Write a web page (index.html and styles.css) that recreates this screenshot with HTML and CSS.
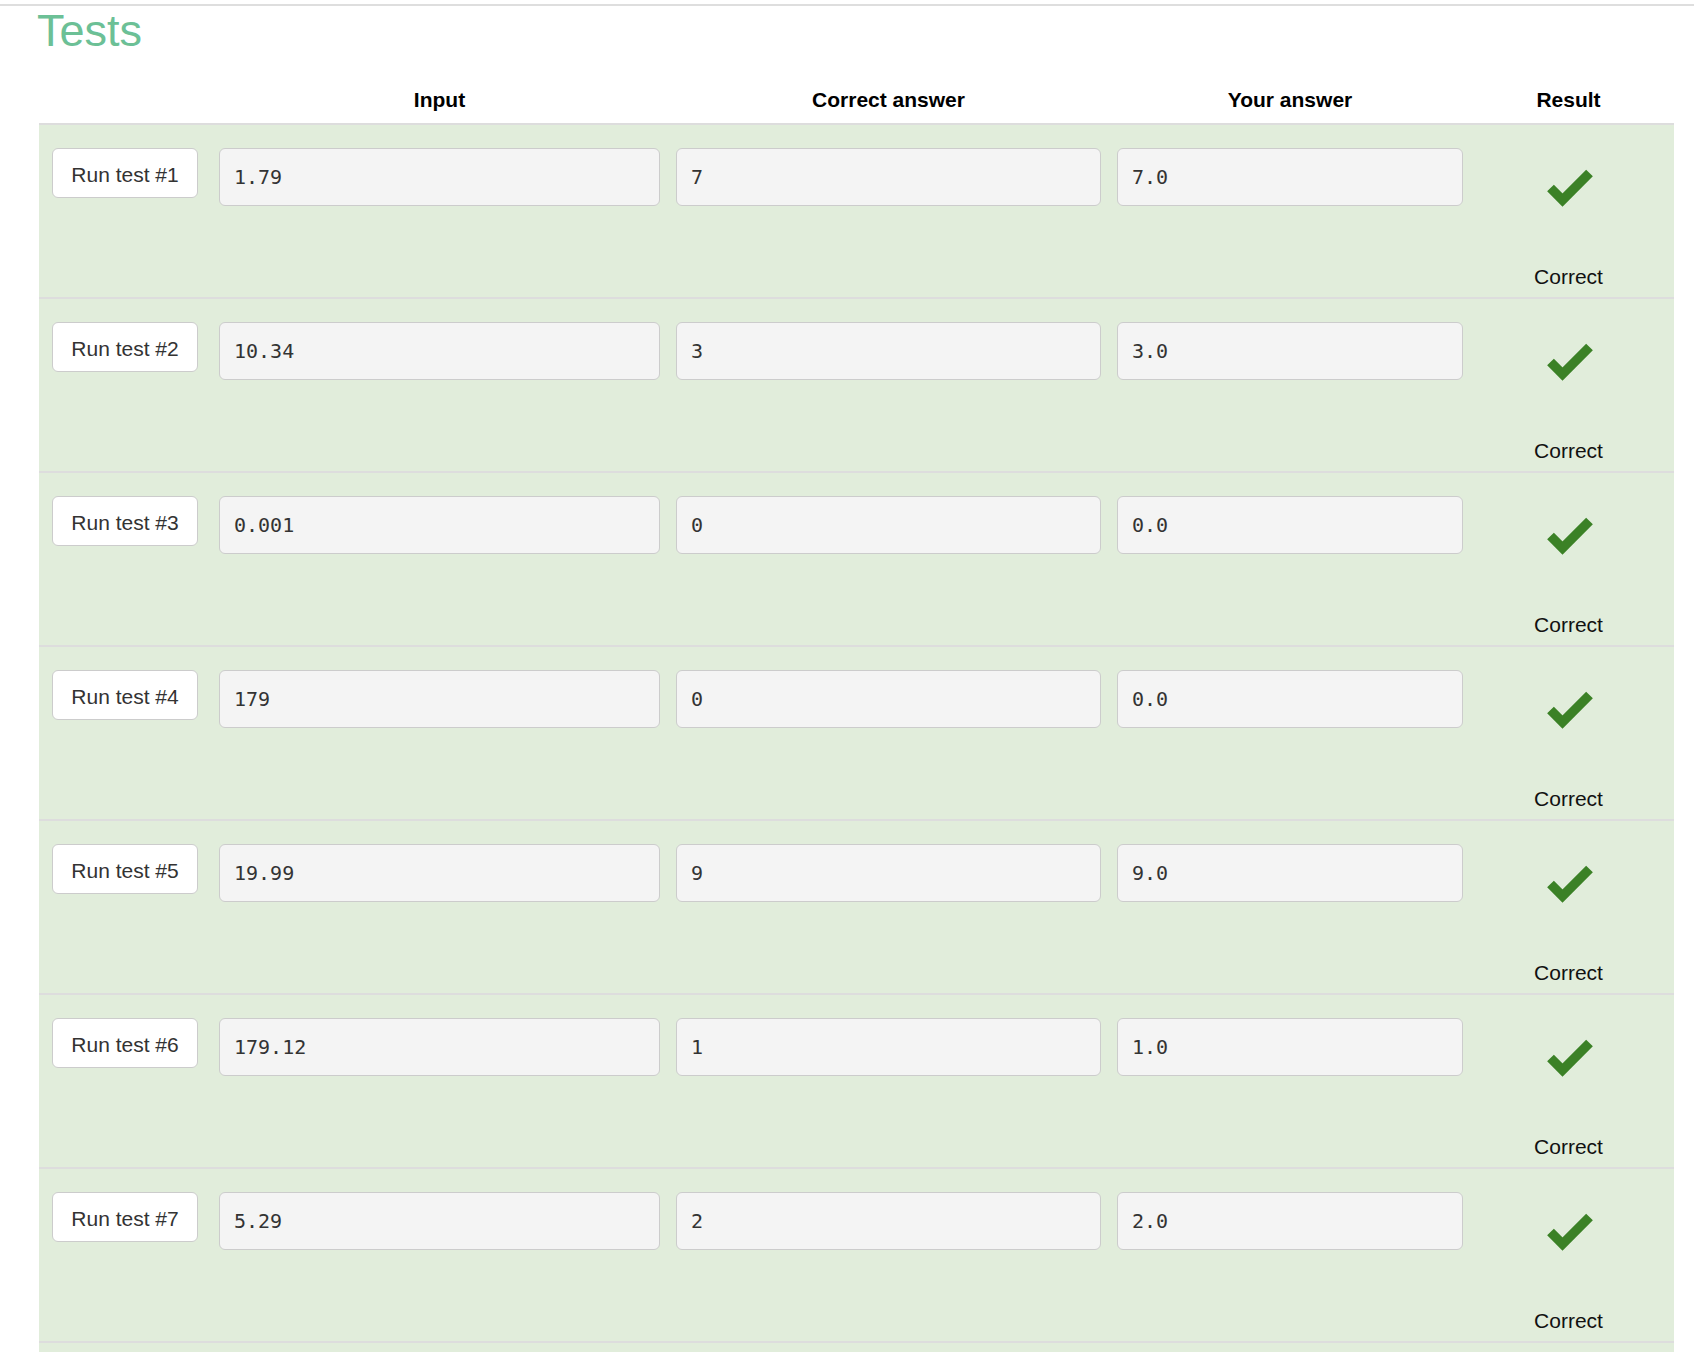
FILE: index.html
```html
<!DOCTYPE html>
<html lang="en">
<head>
<meta charset="utf-8">
<title>Tests</title>
<link rel="stylesheet" href="styles.css">
</head>
<body>
<section class="tests">
  <h2 class="tests-title">Tests</h2>
  <table class="tests-table">
    <colgroup>
      <col class="col-run">
      <col class="col-input">
      <col class="col-correct">
      <col class="col-yours">
      <col class="col-result">
    </colgroup>
    <thead>
      <tr>
        <th></th>
        <th>Input</th>
        <th>Correct answer</th>
        <th>Your answer</th>
        <th class="result-head">Result</th>
      </tr>
    </thead>
    <tbody>
      <tr class="pass">
        <td class="run-cell"><button class="run-btn" type="button">Run test #1</button></td>
        <td><input class="field" type="text" readonly value="1.79"></td>
        <td><input class="field" type="text" readonly value="7"></td>
        <td><input class="field" type="text" readonly value="7.0"></td>
        <td class="result-cell"><svg class="check" viewBox="0 0 48 38" width="48" height="38"><polyline points="5.5,19 17.5,31 44.5,4"/></svg><span class="verdict">Correct</span></td>
      </tr>
      <tr class="pass">
        <td class="run-cell"><button class="run-btn" type="button">Run test #2</button></td>
        <td><input class="field" type="text" readonly value="10.34"></td>
        <td><input class="field" type="text" readonly value="3"></td>
        <td><input class="field" type="text" readonly value="3.0"></td>
        <td class="result-cell"><svg class="check" viewBox="0 0 48 38" width="48" height="38"><polyline points="5.5,19 17.5,31 44.5,4"/></svg><span class="verdict">Correct</span></td>
      </tr>
      <tr class="pass">
        <td class="run-cell"><button class="run-btn" type="button">Run test #3</button></td>
        <td><input class="field" type="text" readonly value="0.001"></td>
        <td><input class="field" type="text" readonly value="0"></td>
        <td><input class="field" type="text" readonly value="0.0"></td>
        <td class="result-cell"><svg class="check" viewBox="0 0 48 38" width="48" height="38"><polyline points="5.5,19 17.5,31 44.5,4"/></svg><span class="verdict">Correct</span></td>
      </tr>
      <tr class="pass">
        <td class="run-cell"><button class="run-btn" type="button">Run test #4</button></td>
        <td><input class="field" type="text" readonly value="179"></td>
        <td><input class="field" type="text" readonly value="0"></td>
        <td><input class="field" type="text" readonly value="0.0"></td>
        <td class="result-cell"><svg class="check" viewBox="0 0 48 38" width="48" height="38"><polyline points="5.5,19 17.5,31 44.5,4"/></svg><span class="verdict">Correct</span></td>
      </tr>
      <tr class="pass">
        <td class="run-cell"><button class="run-btn" type="button">Run test #5</button></td>
        <td><input class="field" type="text" readonly value="19.99"></td>
        <td><input class="field" type="text" readonly value="9"></td>
        <td><input class="field" type="text" readonly value="9.0"></td>
        <td class="result-cell"><svg class="check" viewBox="0 0 48 38" width="48" height="38"><polyline points="5.5,19 17.5,31 44.5,4"/></svg><span class="verdict">Correct</span></td>
      </tr>
      <tr class="pass">
        <td class="run-cell"><button class="run-btn" type="button">Run test #6</button></td>
        <td><input class="field" type="text" readonly value="179.12"></td>
        <td><input class="field" type="text" readonly value="1"></td>
        <td><input class="field" type="text" readonly value="1.0"></td>
        <td class="result-cell"><svg class="check" viewBox="0 0 48 38" width="48" height="38"><polyline points="5.5,19 17.5,31 44.5,4"/></svg><span class="verdict">Correct</span></td>
      </tr>
      <tr class="pass">
        <td class="run-cell"><button class="run-btn" type="button">Run test #7</button></td>
        <td><input class="field" type="text" readonly value="5.29"></td>
        <td><input class="field" type="text" readonly value="2"></td>
        <td><input class="field" type="text" readonly value="2.0"></td>
        <td class="result-cell"><svg class="check" viewBox="0 0 48 38" width="48" height="38"><polyline points="5.5,19 17.5,31 44.5,4"/></svg><span class="verdict">Correct</span></td>
      </tr>
      <tr class="pass tail">
        <td colspan="5"></td>
      </tr>
    </tbody>
  </table>
</section>
</body>
</html>
```

FILE: styles.css
```css
html, body {
  margin: 0;
  padding: 0;
  background: #ffffff;
}

body {
  font-family: "Liberation Sans", Arial, Helvetica, sans-serif;
  color: #000;
}

.tests {
  margin-top: 4px;
  border-top: 2px solid #dedede;
  padding: 0 20px 0 39px;
}

.tests-title {
  margin: 0 0 0 -2px;
  font-size: 45px;
  line-height: 50px;
  font-weight: 400;
  color: #6cc096;
}

.tests-table {
  margin-top: 24px;
  width: 1635px;
  table-layout: fixed;
  border-collapse: separate;
  border-spacing: 0;
}

.col-run { width: 172px; }
.col-input { width: 457px; }
.col-correct { width: 441px; }
.col-yours { width: 362px; }
.col-result { width: 203px; }

.tests-table th {
  font-size: 21px;
  line-height: 24px;
  font-weight: 700;
  text-align: center;
  padding: 8px 8px 11px;
  border-bottom: 2px solid #dddddd;
}

.tests-table th.result-head {
  padding-left: 0;
}

.tests-table td {
  vertical-align: top;
  padding: 23px 8px 8px;
  background: #e1eddb;
  border-bottom: 2px solid #dddddd;
}

.tests-table td.run-cell {
  padding-left: 13px;
}

.tests-table tr.tail td {
  height: 40px;
  padding: 0;
  border-bottom: 0;
}

.run-btn {
  display: block;
  box-sizing: border-box;
  width: 146px;
  height: 50px;
  padding: 4px 0 0;
  margin: 0;
  background: #ffffff;
  border: 1px solid #cccccc;
  border-radius: 6px;
  font-family: "Liberation Sans", Arial, Helvetica, sans-serif;
  font-size: 21px;
  line-height: 44px;
  color: #333333;
  text-align: center;
  cursor: pointer;
}

.field {
  display: block;
  box-sizing: border-box;
  width: 100%;
  height: 58px;
  margin: 0;
  padding: 0 14px;
  background: #f4f4f4;
  border: 1px solid #cccccc;
  border-radius: 6px;
  font-family: "DejaVu Sans Mono", "Liberation Mono", monospace;
  font-size: 20px;
  color: #333333;
  outline: none;
}

.tests-table td.result-cell {
  padding-left: 0;
  text-align: center;
}

.check {
  display: block;
  margin: 21px auto 58px;
  fill: none;
  stroke: #3b8126;
  stroke-width: 9.5;
  stroke-linecap: butt;
  stroke-linejoin: miter;
}

.verdict {
  display: block;
  font-size: 21px;
  line-height: 24px;
  color: #111111;
}
```
